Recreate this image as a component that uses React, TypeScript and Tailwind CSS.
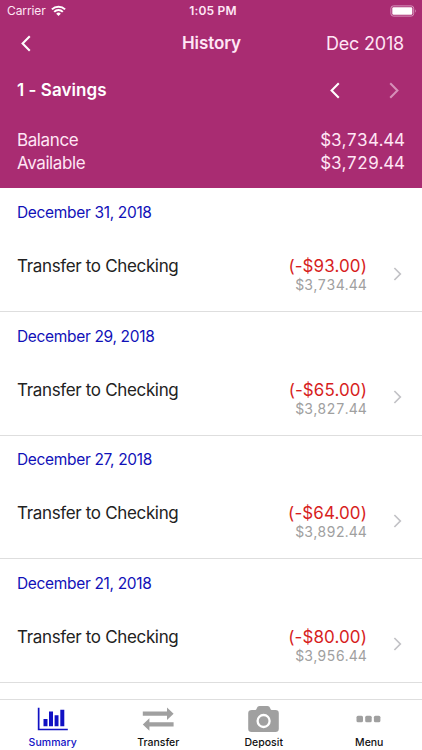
import React from "react";

type Entry = { date: string; amount: string; balance: string };

const entries: Entry[] = [
  { date: "December 31, 2018", amount: "(-$93.00)", balance: "$3,734.44" },
  { date: "December 29, 2018", amount: "(-$65.00)", balance: "$3,827.44" },
  { date: "December 27, 2018", amount: "(-$64.00)", balance: "$3,892.44" },
  { date: "December 21, 2018", amount: "(-$80.00)", balance: "$3,956.44" },
];

function Chevron({ right, className }: { right?: boolean; className: string }) {
  return (
    <svg viewBox="0 0 10 18" className={className} fill="none" stroke="currentColor" strokeWidth="2.2">
      <path d={right ? "M1 1.3 8.6 9 1 16.7" : "M9 1.3 1.4 9 9 16.7"} />
    </svg>
  );
}

function StatusBar() {
  return (
    <div className="grid h-[22px] grid-cols-3 items-center text-[12px] leading-[22px] text-[#ffe6f5]">
      <div className="flex items-center gap-[5px] pl-[7px]">
        <span className="tracking-[-0.1px]">Carrier</span>
        <svg viewBox="0 0 15 11" className="-mt-px h-[11px] w-[15px] text-white" fill="none" stroke="currentColor" strokeWidth="2">
          <path d="M.9 4.4a9.3 9.3 0 0 1 13.2 0M3.2 6.9a6 6 0 0 1 8.6 0" />
          <path d="M5.2 8.7a3.2 3.2 0 0 1 4.6 0L7.5 11Z" fill="currentColor" stroke="none" />
        </svg>
      </div>
      <div className="pl-[4px] text-center font-semibold tracking-[0.2px]">1:05 PM</div>
      <svg viewBox="0 0 27 12" className="mr-[5px] h-[12px] w-[27px] justify-self-end">
        <rect x=".9" y=".9" width="22.8" height="10.2" rx="2.5" fill="none" stroke="#d795bd" />
        <rect x="2.3" y="2.3" width="20" height="7.4" rx="1.2" fill="white" />
        <path d="M25 4.2q1.5 1.8 0 3.6Z" fill="#dba9c8" />
      </svg>
    </div>
  );
}

function Header() {
  return (
    <header className="h-[188px] shrink-0 bg-[#a92c72] text-white">
      <StatusBar />
      <div className="grid h-[43px] grid-cols-3 items-center pr-[18px] pl-[21px]">
        <Chevron className="h-[17px] w-[10px]" />
        <h1 className="pt-px pr-[2px] text-center text-[17px] font-semibold tracking-[-0.1px] text-[#ffe6f5]">History</h1>
        <span className="text-right text-[18px] tracking-[-0.2px] text-[#ffe6f5]">Dec 2018</span>
      </div>
      <div className="flex h-[50px] items-center pr-[23px] pl-[17px]">
        <h2 className="flex-1 pt-[2px] text-[17px] font-semibold tracking-[0.05px]">1 - Savings</h2>
        <Chevron className="mr-[49px] h-[17px] w-[10px]" />
        <Chevron right className="h-[17px] w-[10px] text-[#d68fb8]" />
      </div>
      <div className="flex flex-col pt-[14px] pr-[17px] pl-[17px] text-[17px] leading-[23px] text-[#ffe6f5]">
        <div className="flex justify-between">
          <span className="tracking-[-0.4px]">Balance</span>
          <span className="tracking-[-0.15px] tabular-nums">$3,734.44</span>
        </div>
        <div className="flex justify-between">
          <span className="tracking-[-0.4px]">Available</span>
          <span className="tracking-[-0.15px] tabular-nums">$3,729.44</span>
        </div>
      </div>
    </header>
  );
}

function Row({ date, amount, balance }: Entry) {
  return (
    <li className="h-[123.5px] pt-[12.25px] pl-[17px]">
      <div className="text-[15.5px] leading-[23px] tracking-[-0.33px] text-[#1111b8]">{date}</div>
      <div className="mt-[30px] flex pr-[20px]">
        <span className="flex-1 text-[17px] leading-[24px] tracking-[-0.34px] text-[#222]">Transfer to Checking</span>
        <div className="text-right">
          <div className="text-[17px] leading-[24px] tracking-[0.1px] text-[#d71e1e]">{amount}</div>
          <div className="text-[14px] leading-[14px] tracking-[0.08px] text-[#a0a0a0] tabular-nums">{balance}</div>
        </div>
        <Chevron right className="mt-[12.5px] ml-[26px] h-[14px] w-[9px] text-[#c2c2c6]" />
      </div>
    </li>
  );
}

function TabBar() {
  return (
    <nav className="grid h-[51px] shrink-0 grid-cols-4 border-t border-[#dedede] bg-white text-[10.5px] leading-[12px] font-medium text-[#111]">
      <div className="flex flex-col items-center text-[#1111c4]">
        <svg viewBox="0 0 31 31" className="mt-[6px] h-[31px] w-[31px]" fill="currentColor">
          <path d="M.8 1.8h1.7v21h28.3v1.5H.8ZM6.5 13h4v7.3h-4ZM12 5.5h4v14.8h-4ZM17.6 9.3h3.9v11h-3.9ZM23.3 3.7h4v16.6h-4Z" />
        </svg>
        <span className="tracking-[0.05px]">Summary</span>
      </div>
      <div className="flex flex-col items-center">
        <svg viewBox="0 0 32 31" className="mt-[6px] h-[31px] w-[32px] text-[#a0a0a0]" fill="currentColor">
          <path d="M.8 5.5h24.2V1.5L31.6 7.7l-6.6 6.2V9.8H.8ZM31.6 16.3v4.3H7.4v4.1L.8 18.5l6.6-6.2v4Z" />
        </svg>
        <span>Transfer</span>
      </div>
      <div className="flex flex-col items-center">
        <svg viewBox="0 0 32 31" className="mt-[6px] h-[31px] w-[32px] text-[#a0a0a0]" fill="currentColor">
          <path d="M4 4h3.2q1 0 1.3-1l.5-1.2Q9.5 0 11.5 0h8q2 0 2.5 1.8l.5 1.2q.3 1 1.3 1H27.5q3.3 0 3.3 3.3v15.4q0 3.3-3.3 3.3H3.5Q.2 26 .2 22.7V7.3Q.2 4 4 4Z" />
          <circle cx="15.6" cy="15" r="6" fill="none" stroke="white" strokeWidth="2.3" />
        </svg>
        <span>Deposit</span>
      </div>
      <div className="flex flex-col items-center">
        <svg viewBox="0 0 32 31" className="mt-[6px] h-[31px] w-[32px] text-[#a0a0a0]" fill="currentColor">
          <rect x="3.5" y="9.7" width="6.5" height="6.6" rx="1.5" />
          <rect x="12.2" y="9.7" width="6.5" height="6.6" rx="1.5" />
          <rect x="20.9" y="9.7" width="6.5" height="6.6" rx="1.5" />
        </svg>
        <span>Menu</span>
      </div>
    </nav>
  );
}

export default function App() {
  return (
    <main className="flex h-[750px] w-[422px] flex-col overflow-hidden bg-white font-['Inter','Liberation_Sans',sans-serif]">
      <Header />
      <ul className="-mt-[0.2px] min-h-0 flex-1 overflow-hidden *:border-t *:border-[#dedede] *:first:border-transparent">
        {entries.map((entry) => (
          <Row key={entry.date} {...entry} />
        ))}
        <li className="h-[40px]" />
      </ul>
      <TabBar />
    </main>
  );
}
